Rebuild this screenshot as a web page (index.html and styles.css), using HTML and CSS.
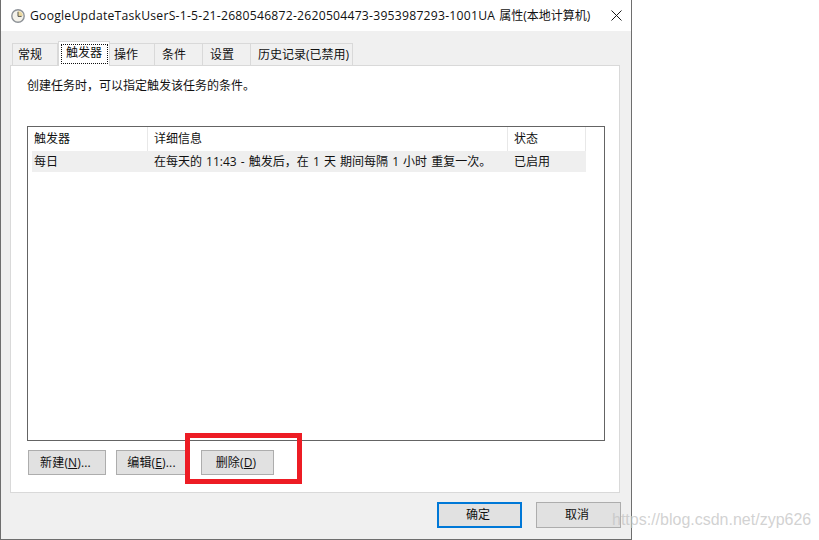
FILE: index.html
```html
<!DOCTYPE html>
<html lang="zh-CN">
<head>
<meta charset="utf-8">
<title>属性</title>
<link rel="stylesheet" href="styles.css">
</head>
<body>
<div class="window">
  <header class="titlebar">
    <svg class="clock" width="14" height="14" viewBox="0 0 14 14">
      <circle cx="7" cy="7" r="6.2" fill="#f4f2ea" stroke="#8d9297" stroke-width="1.4"/>
      <path d="M7 7V2.2A4.8 4.8 0 0 1 11.8 7Z" fill="#ecd9a0"/>
      <path d="M7 2.8V7.4H10.6" fill="none" stroke="#55564f" stroke-width="1"/>
    </svg>
    <span class="title"><span class="title-id">GoogleUpdateTaskUserS-1-5-21-2680546872-2620504473-3953987293-1001UA</span> 属性(本地计算机)</span>
    <svg class="close" width="11" height="11" viewBox="0 0 11 11">
      <path d="M0.5 0.5L10.5 10.5M10.5 0.5L0.5 10.5" stroke="#1a1a1a" stroke-width="1" fill="none"/>
    </svg>
  </header>
  <main class="client">
    <nav class="tabs">
      <span class="tab tab-a">常规</span>
      <span class="tab tab-b active"><span class="focus">触发器</span></span>
      <span class="tab tab-c">操作</span>
      <span class="tab tab-d">条件</span>
      <span class="tab tab-d">设置</span>
      <span class="tab tab-e">历史记录(已禁用)</span>
    </nav>
    <section class="panel">
      <p class="intro">创建任务时，可以指定触发该任务的条件。</p>
      <div class="list">
        <div class="row head">
          <span class="cell c1">触发器</span>
          <span class="cell c2">详细信息</span>
          <span class="cell c3">状态</span>
        </div>
        <div class="row item">
          <span class="cell c1">每日</span>
          <span class="cell c2">在每天的 11:43 - 触发后，在 1 天 期间每隔 1 小时 重复一次。</span>
          <span class="cell c3">已启用</span>
        </div>
      </div>
      <div class="actions">
        <button class="btn b-new">新建(<u>N</u>)...</button>
        <button class="btn b-edit">编辑(<u>E</u>)...</button>
        <button class="btn b-del">删除(<u>D</u>)</button>
      </div>
    </section>
    <footer class="dialog-buttons">
      <button class="btn big primary">确定</button>
      <button class="btn big">取消</button>
    </footer>
  </main>
</div>
<div class="highlight"></div>
<div class="watermark">https://blog.csdn.net/zyp626</div>
</body>
</html>
```
FILE: styles.css
```css
* { box-sizing: border-box; }
html, body { margin: 0; padding: 0; }
body {
  width: 819px;
  height: 540px;
  background: #fff;
  overflow: hidden;
  position: relative;
  font: 12px/16px "Open Sans", "Noto Sans CJK SC", sans-serif;
  color: #111;
}
.window {
  width: 632px;
  height: 540px;
  border: 1px solid #6e6e6e;
  border-top: 0;
  display: flex;
  flex-direction: column;
  background: #f0f0f0;
}
.titlebar {
  height: 31px;
  background: #fff;
  display: flex;
  align-items: center;
  padding: 0 9px 0 10px;
  flex: none;
}
.clock { flex: none; margin-right: 5px; }
.title { flex: 1; white-space: nowrap; font-size: 12px; color: #111; word-spacing: 1px; }
.title-id { font-size: 12.2px; letter-spacing: 0.23px; }
.close { flex: none; }
.client { flex: 1; display: flex; flex-direction: column; padding: 10px 10px 0 9px; }
.tabs { display: flex; align-items: flex-end; height: 24px; padding-left: 2px; position: relative; z-index: 1; }
.tab {
  height: 22px;
  border: 1px solid #d9d9d9;
  border-bottom: 0;
  border-left: 0;
  background: #f0f0f0;
  display: flex;
  align-items: center;
  padding-left: 6px;
  line-height: 16px;
}
.tab-a { width: 46px; border-left: 1px solid #d9d9d9; padding-left: 5px; }
.tab-b {
  width: 52px;
  height: 25px;
  margin-bottom: -1px;
  background: #fff;
  border-left: 1px solid #d9d9d9;
  padding: 2px 1px 2px 2px;
}
.focus { flex: 1; height: 100%; border: 1px dotted #111; display: flex; align-items: center; padding: 0 0 2px 4px; }
.tab-c { width: 45px; padding-left: 4px; }
.tab-d { width: 48px; padding-left: 7px; }
.tab-e { width: 102px; padding-left: 7px; }
.panel {
  width: 610px;
  height: 428px;
  background: #fff;
  border: 1px solid #d9d9d9;
  padding: 12px 15px 0 16px;
}
.intro { margin: 0; height: 16px; }
.list {
  margin-top: 32px;
  width: 578px;
  height: 315px;
  border: 1px solid #646464;
  padding-left: 4px;
}
.row { display: flex; width: 554px; }
.head { height: 24px; margin-left: -4px; width: 558px; }
.head .cell { border-right: 1px solid #e8e8e8; }
.head .c1 { width: 120px; padding-left: 6px; }
.head .c2 { width: 360px; padding-left: 6px; }
.head .c3 { width: 78px; padding-left: 6px; }
.cell { display: flex; align-items: center; white-space: nowrap; }
.item { height: 21px; background: #efefef; }
.item .c1 { width: 116px; padding-left: 2px; }
.item .c2 { width: 360px; padding-left: 6px; word-spacing: 1px; }
.item .c3 { width: 78px; padding-left: 6px; }
.actions { display: flex; margin-top: 9px; margin-left: 1px; }
.btn {
  font: inherit;
  color: #111;
  background: #e1e1e1;
  border: 1px solid #adadad;
  height: 25px;
  padding: 0 3px 0 0;
  display: block;
  letter-spacing: 0.15px;
}
.b-new { width: 78px; }
.b-edit { width: 74px; margin-left: 10px; }
.b-del { width: 73px; margin-left: 11px; }
.dialog-buttons { display: flex; justify-content: flex-end; gap: 14px; margin-top: 9px; width: 611px; }
.big { width: 85px; height: 26px; letter-spacing: 0; }
.primary { border: 2px solid #0078d7; }
.highlight {
  position: absolute;
  left: 185px;
  top: 433px;
  width: 117px;
  height: 51px;
  border: 5px solid #ed1c24;
}
.watermark {
  position: absolute;
  left: 612px;
  top: 510px;
  font: 16px/20px "Liberation Sans", sans-serif;
  color: rgba(195, 195, 195, 0.75);
  white-space: nowrap;
}
```
